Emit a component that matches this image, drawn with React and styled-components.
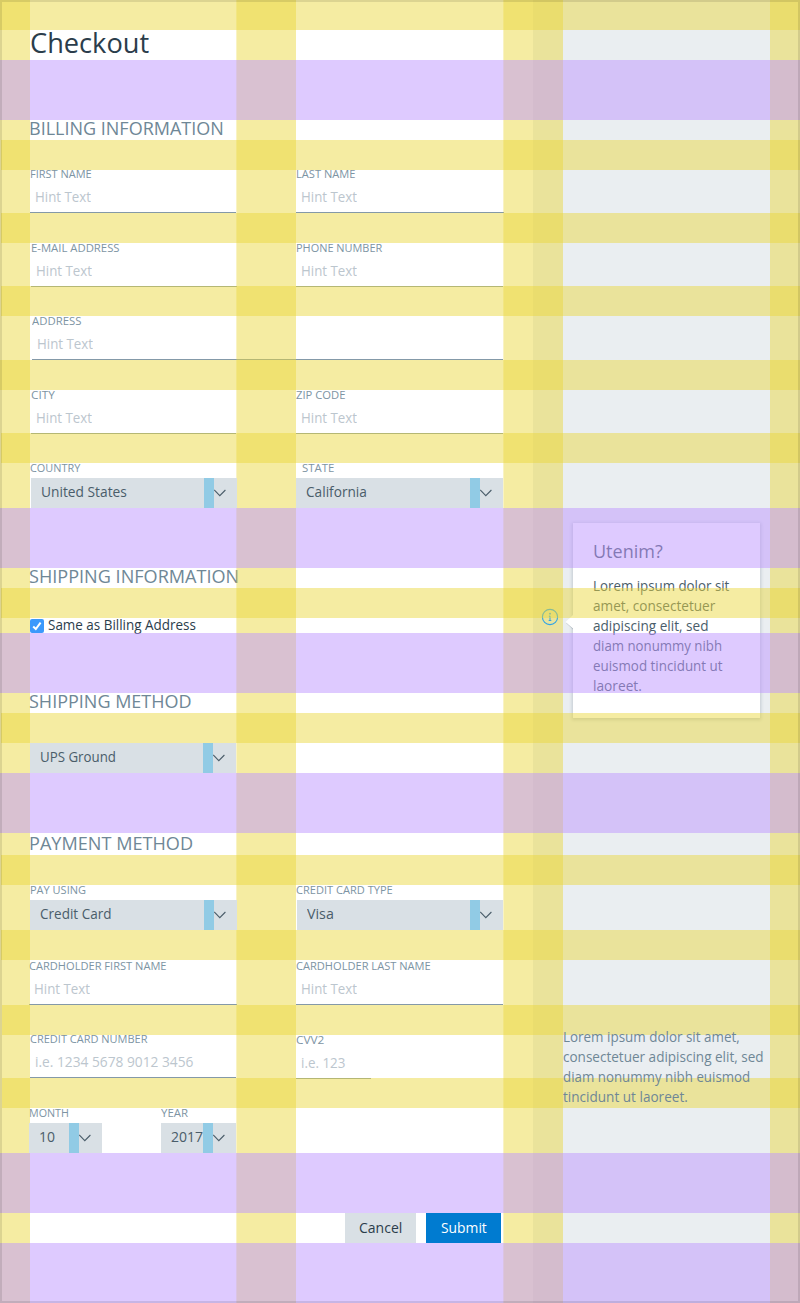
import React, { useLayoutEffect, useRef, useState } from "react";
import styled, { createGlobalStyle, css } from "styled-components";

const GlobalStyle = createGlobalStyle`
  *, *::before, *::after { box-sizing: border-box; }
  body { margin: 0; background: #fff; font-family: "Open Sans", "Noto Sans", sans-serif; }
`;

const color = {
  title: "#2b3d4b",
  heading: "#6f8796",
  label: "#7d94a3",
  hint: "#bcc6ce",
  body: "#4a5d6a",
  line: "#8499a8",
  control: "#d9e0e5",
  gap: "#91cbe5",
  primary: "#007bd0",
  aside: "#eaeef1",
};

/* ---------- text ---------- */

const Line = styled.span`
  display: inline-block;
  white-space: pre;
  transform-origin: 0 50%;
`;

/* Sets one line of text to a given measure by condensing it horizontally. */
function Fit({ w, children }) {
  const ref = useRef(null);
  const [scale, setScale] = useState(1);
  useLayoutEffect(() => {
    setScale(w / ref.current.offsetWidth);
  }, [w, children]);
  return (
    <Line ref={ref} style={{ transform: `scaleX(${scale})` }}>
      {children}
    </Line>
  );
}

/* ---------- page ---------- */

const Page = styled.div`
  position: relative;
  display: flex;
  width: 800px;
  height: 1303px;
  overflow: hidden;
  background: #fff;
`;

const Main = styled.main`
  width: 533px;
  padding: 30px 0 0 30px;
`;

const Title = styled.h1`
  margin: 0;
  height: 30px;
  font-size: 28px;
  font-weight: 400;
  line-height: 24px;
  color: ${color.title};
`;

const Heading = styled.h2`
  margin: ${(p) => p.$top ?? 60}px 0 0 -1px;
  height: 20px;
  font-size: 18px;
  font-weight: 400;
  line-height: 16px;
  color: ${color.heading};
`;

const Row = styled.div`
  display: grid;
  grid-template-columns: 266px 1fr;
  align-items: start;
  height: ${(p) => p.$h ?? 44}px;
  margin-top: ${(p) => p.$top ?? 30}px;
`;

const Pair = styled.div`
  display: flex;
  gap: 59px;
`;

const Cell = styled.div`
  width: ${(p) => p.$w}px;
  margin-left: ${(p) => p.$dx ?? 0}px;
  margin-top: ${(p) => p.$dy ?? 0}px;
`;

const Label = styled.div`
  height: 15px;
  margin-left: ${(p) => p.$dx ?? 0}px;
  font-size: 11px;
  line-height: 9px;
  white-space: nowrap;
  color: ${color.label};
`;

const Input = styled.div`
  height: 29px;
  padding-left: 5px;
  border-bottom: 1px solid ${color.line};
  font-size: 14px;
  line-height: 25px;
  white-space: nowrap;
  color: ${color.hint};
`;

const SelectBox = styled.div`
  position: relative;
  z-index: 1;
  display: flex;
  height: 30px;
  padding-left: 10px;
  background: ${color.control};
  font-size: 14px;
  line-height: 27px;
  white-space: nowrap;
  color: ${color.body};
`;

const SelectValue = styled.span`
  flex: 1;
  min-width: 0;
`;

const SelectGap = styled.span`
  width: 10px;
  background: ${color.gap};
`;

const Chevron = styled.svg`
  width: 23px;
  height: 30px;
  fill: none;
  stroke: ${color.body};
  stroke-width: 1.1;
`;

function Field({ label, lw, hint = "Hint Text", hw = 56, w = 207, dx, dy }) {
  return (
    <Cell $w={w} $dx={dx} $dy={dy}>
      <Label><Fit w={lw}>{label}</Fit></Label>
      <Input><Fit w={hw}>{hint}</Fit></Input>
    </Cell>
  );
}

function Select({ label, lw, ldx, value, vw, w = 206, dx }) {
  return (
    <Cell $w={w} $dx={dx}>
      {label && <Label $dx={ldx}><Fit w={lw}>{label}</Fit></Label>}
      <SelectBox>
        <SelectValue><Fit w={vw}>{value}</Fit></SelectValue>
        <SelectGap />
        <Chevron viewBox="0 0 23 30"><path d="M.2 12 5.8 17.7 11.4 12" /></Chevron>
      </SelectBox>
    </Cell>
  );
}

const CheckRow = styled.div`
  display: flex;
  gap: 4px;
  height: 14px;
  margin-top: 31px;
  font-size: 14px;
  line-height: 11px;
  white-space: nowrap;
  color: ${color.title};
`;

const CheckIcon = styled.svg`
  width: 14px;
  height: 14px;
`;

const Actions = styled.div`
  display: flex;
  gap: 10px;
  margin: 60px 0 0 315px;
`;

const Button = styled.div`
  width: ${(p) => p.$w}px;
  height: 30px;
  padding-left: ${(p) => p.$pad}px;
  font-size: 14px;
  line-height: 29px;
  white-space: nowrap;
  color: ${color.title};
  background: ${color.control};
  ${(p) => p.$primary && css`
    color: #fff;
    background: ${color.primary};
  `}
`;

/* ---------- sidebar ---------- */

const Aside = styled.aside`
  width: 267px;
  padding-top: 523px;
  background: ${color.aside};
`;

const Help = styled.div`
  display: flex;
  height: 195px;
`;

const InfoIcon = styled.svg`
  position: relative;
  z-index: 1;
  width: 18px;
  height: 18px;
  margin: 85px 14px 0 8px;
`;

const Popover = styled.div`
  position: relative;
  width: 187px;
  padding: 18px 0 0 20px;
  background: #fff;
  box-shadow: 0 1px 3px 1px rgba(60, 80, 95, 0.22);
`;

const Pointer = styled.svg`
  position: absolute;
  z-index: 1;
  left: -9px;
  top: 90px;
  width: 10px;
  height: 18px;
`;

const PopoverTitle = styled.div`
  font-size: 18px;
  line-height: 20px;
  color: ${color.body};
`;

const Copy = styled.div`
  display: flex;
  flex-direction: column;
  align-items: flex-start;
  margin: ${(p) => p.$margin};
  font-size: 14px;
  line-height: 20px;
  color: ${(p) => p.$color};
  ${(p) => p.$raised && css`
    position: relative;
    z-index: 3;
  `}
`;

/* ---------- spacing guides laid over the form ---------- */

const yellow = "rgba(234, 215, 61, 0.48)";
const purple = "rgba(190, 150, 255, 0.5)";

const Layer = styled.div`
  position: absolute;
  inset: 0;
  z-index: ${(p) => (p.$vertical ? 0 : 2)};
  display: flex;
  flex-direction: ${(p) => (p.$vertical ? "row" : "column")};
  pointer-events: none;
`;

const Column = styled.div`
  width: ${(p) => p.$w}px;
  margin-left: ${(p) => p.$gap}px;
  background: ${yellow};
  background-clip: padding-box;
  ${(p) => p.$soft && css`border-left: 1px solid rgba(234, 215, 61, 0.3);`}
`;

const Band = styled.div`
  flex: none;
  height: ${(p) => p.$h}px;
  margin: ${(p) => p.$gap}px 0 0 ${(p) => p.$x ?? 0}px;
  background: ${(p) => (p.$major ? purple : yellow)};
`;

const Frame = styled(Layer)`
  border: 2px solid rgba(0, 0, 0, 0.1);
`;

const bands = [
  { gap: 0, h: 30 },
  { gap: 30, h: 60, major: true },
  { gap: 20, h: 30, x: 1 },
  { gap: 43, h: 30, x: 1 },
  { gap: 43, h: 30, x: 1 },
  { gap: 44, h: 30 },
  { gap: 43, h: 30, x: 1 },
  { gap: 45, h: 60, major: true },
  { gap: 20, h: 30, x: 1 },
  { gap: 15, h: 60, major: true },
  { gap: 20, h: 30, x: 1 },
  { gap: 30, h: 60, major: true },
  { gap: 22, h: 30, x: 1 },
  { gap: 45, h: 30, x: 1 },
  { gap: 45, h: 30, x: 2 },
  { gap: 43, h: 30, x: 2 },
  { gap: 45, h: 60, major: true },
  { gap: 30, h: 60, major: true },
];

const helpLines = [
  ["Lorem ipsum dolor sit", 136],
  ["amet, consectetuer", 122.5],
  ["adipiscing elit, sed", 115.5],
  ["diam nonummy nibh", 129.5],
  ["euismod tincidunt ut", 130],
  ["laoreet.", 49],
];

const noteLines = [
  ["Lorem ipsum dolor sit amet,", 176.5],
  ["consectetuer adipiscing elit, sed", 201],
  ["diam nonummy nibh euismod", 187.5],
  ["tincidunt ut laoreet.", 125],
];

export default function App() {
  return (
    <Page>
      <GlobalStyle />
      <Main>
        <Title><Fit w={119.5}>Checkout</Fit></Title>

        <Heading><Fit w={195}>BILLING INFORMATION</Fit></Heading>
        <Row $top={29}>
          <Field label="FIRST NAME" lw={62} w={206} />
          <Field label="LAST NAME" lw={59.5} w={208} />
        </Row>
        <Row>
          <Field label="E-MAIL ADDRESS" lw={88.5} w={206} dx={1} />
          <Field label="PHONE NUMBER" lw={86.5} />
        </Row>
        <Row $top={29}>
          <Field label="ADDRESS" lw={49.5} w={471} dx={2} />
        </Row>
        <Row>
          <Field label="CITY" lw={23.5} w={205} dx={1} />
          <Field label="ZIP CODE" lw={49} />
        </Row>
        <Row $top={29} $h={45}>
          <Select label="COUNTRY" lw={50.5} ldx={-1} value="United States" vw={85.5} dx={1} />
          <Select label="STATE" lw={32} ldx={6} value="California" vw={60.5} w={207} />
        </Row>

        <Heading><Fit w={210}>SHIPPING INFORMATION</Fit></Heading>
        <CheckRow>
          <CheckIcon viewBox="0 0 14 14">
            <rect width="14" height="14" rx="2" fill="#3b99fc" />
            <path d="M3.2 7.5 5.8 10 10.6 3.7" fill="none" stroke="#fff" strokeWidth="2" />
          </CheckIcon>
          <Fit w={148}>Same as Billing Address</Fit>
        </CheckRow>

        <Heading><Fit w={163}>SHIPPING METHOD</Fit></Heading>
        <Row $h={30}>
          <Select value="UPS Ground" vw={76} />
        </Row>

        <Heading $top={62}><Fit w={164}>PAYMENT METHOD</Fit></Heading>
        <Row $h={45}>
          <Select label="PAY USING" lw={56} value="Credit Card" vw={71.5} w={207} />
          <Select label="CREDIT CARD TYPE" lw={96.5} ldx={-1} value="Visa" vw={26.5} dx={1} />
        </Row>
        <Row $top={31}>
          <Field label="CARDHOLDER FIRST NAME" lw={138} w={208} dx={-1} />
          <Field label="CARDHOLDER LAST NAME" lw={135} />
        </Row>
        <Row $top={29}>
          <Field label="CREDIT CARD NUMBER" lw={118} w={206} hint="i.e. 1234 5678 9012 3456" hw={158} />
          <Field label="CVV2" lw={28} w={75} dy={1} hint="i.e. 123" hw={44} />
        </Row>
        <Row $h={45}>
          <Pair>
            <Select label="MONTH" lw={40} value="10" vw={16} w={73} dx={-1} />
            <Select label="YEAR" lw={27} value="2017" vw={32} w={75} />
          </Pair>
        </Row>

        <Actions>
          <Button $w={71} $pad={14}><Fit w={43}>Cancel</Fit></Button>
          <Button $w={75} $pad={15} $primary><Fit w={45.5}>Submit</Fit></Button>
        </Actions>
      </Main>

      <Aside>
        <Help>
          <InfoIcon viewBox="0 0 18 18" fill="none" stroke="#2fa3e6">
            <circle cx="9" cy="9" r="7.6" strokeWidth="1.1" />
            <path d="M9 7.8v4.7M7.9 8.2H9M7.7 12.5h2.6" />
            <circle cx="9" cy="5.7" r=".9" fill="#2fa3e6" stroke="none" />
          </InfoIcon>
          <Popover>
            <Pointer viewBox="0 0 10 18">
              <path d="M9 4 2 10 9 16.5z" fill="#3c505f" fillOpacity=".25" />
              <path d="M10 1.5 9 2 1.5 9 9 15.5h1z" fill="#fff" />
            </Pointer>
            <PopoverTitle><Fit w={70}>Utenim?</Fit></PopoverTitle>
            <Copy $margin="15px 0 0" $color={color.body}>
              {helpLines.map(([text, w]) => <Fit key={text} w={w}>{text}</Fit>)}
            </Copy>
          </Popover>
        </Help>
        <Copy $raised $margin="309px 0 0 30px" $color={color.heading}>
          {noteLines.map(([text, w]) => <Fit key={text} w={w}>{text}</Fit>)}
        </Copy>
      </Aside>

      <Layer $vertical>
        <Column $w={30} $gap={0} />
        <Column $w={60} $gap={206} $soft />
        <Column $w={60} $gap={207} $soft />
        <Column $w={30} $gap={207} />
      </Layer>
      <Layer>
        {bands.map((b, i) => (
          <Band key={i} $gap={b.gap} $h={b.h} $x={b.x} $major={b.major} />
        ))}
      </Layer>
      <Frame />
    </Page>
  );
}
